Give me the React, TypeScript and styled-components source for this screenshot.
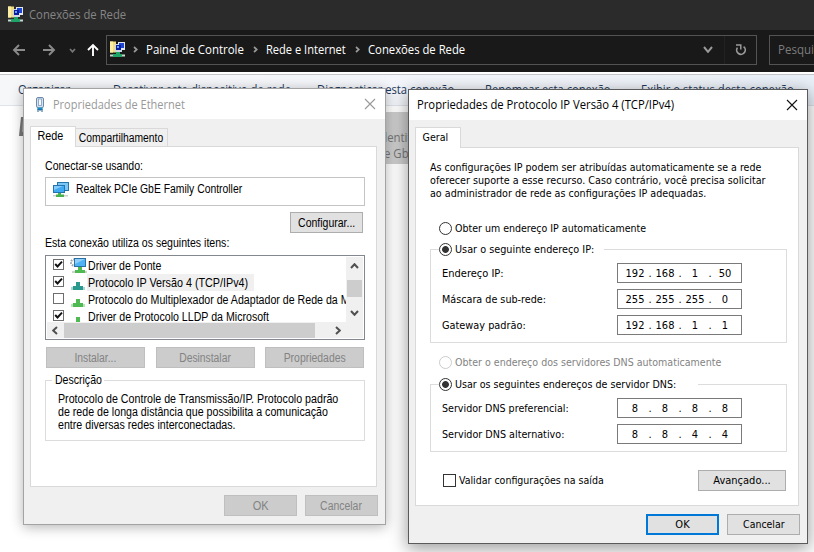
import React from 'react';
import styled, { createGlobalStyle, css } from 'styled-components';

const Global = createGlobalStyle`
  *, *::before, *::after { box-sizing: border-box; }
  body { margin: 0; background: #fff; overflow: hidden; }
  p { margin: 0; }
`;

const segoe = css`font-family: "Open Sans", "Noto Sans", sans-serif; font-size: 12px;`;
const tahoma = css`font-family: "DejaVu Sans Condensed", "DejaVu Sans", sans-serif; font-stretch: condensed; font-size: 11px;`;
const msSans = css`font-family: "Liberation Sans", Arial, sans-serif; font-size: 12px;`;

/* A run of text, horizontally condensed by $sx */
const T = styled.span<{ $sx?: number; $center?: boolean }>`
  display: inline-block;
  white-space: pre;
  transform: scaleX(${p => p.$sx ?? 1});
  transform-origin: ${p => (p.$center ? 'center' : 'left')};
`;

/* ---------- Explorer window ---------- */
const Desktop = styled.main`
  position: relative;
  width: 814px;
  height: 552px;
  overflow: hidden;
  background: #fff;
  color: #000;
`;
const ExplorerTitle = styled.header`
  ${segoe}
  height: 30px;
  padding: 0 0 1px 7px;
  display: flex;
  align-items: center;
  gap: 5px;
  background: #2b2b2b;
  color: #858585;
`;
const NavBar = styled.nav`
  ${segoe}
  height: 42px;
  background: #191919;
  display: flex;
  align-items: flex-start;
  padding-top: 5px;
`;
const NavButtons = styled.div`
  width: 106px;
  height: 30px;
  flex: none;
  display: flex;
  align-items: center;
`;
const AddressBox = styled.div`
  width: 651px;
  height: 30px;
  flex: none;
  border: 1px solid #535353;
  display: flex;
  align-items: center;
  padding: 0 0 1px 2px;
  color: #fff;
`;
const Crumb = styled.div<{ $w: number }>`
  width: ${p => p.$w}px;
  flex: none;
  display: flex;
  align-items: center;
`;
const ChevronSlot = styled.span`
  width: 20px;
  padding-right: 2px;
  flex: none;
  display: flex;
  justify-content: center;
`;
const AddressTools = styled.div`
  margin-left: auto;
  height: 28px;
  display: flex;
  align-items: center;
`;
const ToolSlot = styled.span<{ $w: number; $divider?: boolean }>`
  width: ${p => p.$w}px;
  height: 28px;
  display: flex;
  align-items: center;
  justify-content: center;
  border-left: ${p => (p.$divider ? '1px solid #222' : '0')};
`;
const SearchBox = styled.div`
  width: 80px;
  height: 30px;
  flex: none;
  margin-left: 12px;
  border: 1px solid #535353;
  padding: 0 0 1px 8px;
  display: flex;
  align-items: center;
  color: #7c7c7c;
`;
const CommandBar = styled.div`
  ${segoe}
  margin-top: 2px;
  height: 32px;
  border-top: 1px solid #c4c6c9;
  border-bottom: 1px solid #dfe3ea;
  background: linear-gradient(90deg, #f6f7f9, #f3f6fb 60%, #eaf0f8);
  color: #1e395b;
  display: flex;
  align-items: center;
  padding: 0 0 1px 18px;
`;
const Command = styled.div<{ $w: number }>`
  width: ${p => p.$w}px;
  flex: none;
  display: flex;
  align-items: center;
  gap: 2px;
`;
const Files = styled.section`
  ${segoe}
  display: flex;
  height: 446px;
  padding: 6px 0 0 19px;
`;
const SelectedConnection = styled.div`
  margin-left: 250px;
  width: 240px;
  height: 52px;
  background: #ccc;
  color: #777;
  line-height: 16px;
  padding-top: 18px;
  display: flex;
  flex-direction: column;
`;
const ConnectionLine = styled.div<{ $indent: number }>`
  padding-left: ${p => p.$indent}px;
`;

/* ---------- Dialog windows ---------- */
const Dialog = styled.section<{ $x: number; $y: number; $w: number; $h: number; $active?: boolean }>`
  position: absolute;
  left: ${p => p.$x}px;
  top: ${p => p.$y}px;
  width: ${p => p.$w}px;
  height: ${p => p.$h}px;
  border: 1px solid ${p => (p.$active ? '#5a5a5a' : '#a3a3a3')};
  background: #f0f0f0;
  box-shadow: ${p => (p.$active ? '0 4px 16px 1px rgba(0,0,0,.38)' : '0 2px 12px 0 rgba(0,0,0,.3)')};
`;
const DialogTitle = styled.header<{ $active?: boolean }>`
  ${segoe}
  height: 30px;
  background: #fff;
  display: flex;
  align-items: center;
  gap: 7px;
  padding: 0 9px ${p => (p.$active ? '1px 8px' : '0 11px')};
  color: ${p => (p.$active ? '#000' : '#999')};
`;
const CloseSlot = styled.span`
  margin-left: auto;
  display: flex;
`;
const TabStrip = styled.div`
  margin: 7px 0 0 6px;
  height: 20px;
  display: flex;
  align-items: flex-end;
`;
const Tab = styled.div<{ $w: number; $on?: boolean; $tahoma?: boolean }>`
  ${p => (p.$tahoma ? tahoma : msSans)}
  width: ${p => p.$w}px;
  height: ${p => (p.$on ? 21 : 18)}px;
  margin-bottom: ${p => (p.$on ? -1 : 0)}px;
  position: relative;
  z-index: 1;
  border: 1px solid #d9d9d9;
  border-bottom: 0;
  border-left-width: ${p => (p.$on ? 1 : 0)}px;
  background: ${p => (p.$on ? '#fff' : '#f0f0f0')};
  display: flex;
  justify-content: center;
  align-items: center;
  padding: 0 ${p => (p.$on ? 5 : 0)}px ${p => (p.$on ? 2 : 0)}px 0;
`;
const Page = styled.div<{ $w: number; $h: number; $tahoma?: boolean }>`
  ${p => (p.$tahoma ? tahoma : msSans)}
  width: ${p => p.$w}px;
  height: ${p => p.$h}px;
  margin-left: 6px;
  border: 1px solid #d9d9d9;
  background: #fff;
  padding: 0 11px 0 14px;
`;
const Footer = styled.footer<{ $tahoma?: boolean }>`
  ${p => (p.$tahoma ? tahoma : msSans)}
  display: flex;
  justify-content: flex-end;
  gap: 8px;
  padding: 8px 7px 0 0;
`;
const ButtonFace = styled.button<{ $w: number; $primary?: boolean }>`
  font: inherit;
  width: ${p => p.$w}px;
  height: 21px;
  padding: 0;
  display: flex;
  align-items: center;
  justify-content: center;
  color: #000;
  background: #e1e1e1;
  border: ${p => (p.$primary ? '2px solid #0078d7' : '1px solid #adadad')};
  &:disabled { color: #838383; background: #ccc; border-color: #bfbfbf; }
`;
const Line = styled.div<{ $h: number; $top?: number }>`
  height: ${p => p.$h}px;
  margin-top: ${p => p.$top ?? 0}px;
  display: flex;
  align-items: center;
`;
const AdapterBox = styled.div`
  height: 29px;
  margin-top: 3px;
  border: 1px solid #c4c4c4;
  display: flex;
  align-items: center;
  gap: 7px;
  padding: 0 0 5px 6px;
`;
const RightRow = styled.div`
  display: flex;
  justify-content: flex-end;
  padding: 6px 2px 0 0;
`;
const ListBox = styled.div`
  width: 320px;
  height: 85px;
  margin-top: 4px;
  border: 1px solid #828790;
  padding: 1px;
  display: flex;
  flex-direction: column;
`;
const ListTop = styled.div`
  display: flex;
  height: 65px;
`;
const Items = styled.div`
  flex: 1;
  min-width: 0;
  height: 65px;
  overflow: hidden;
`;
const Item = styled.div`
  height: 17px;
  padding-left: 6px;
  display: flex;
  align-items: flex-start;
  white-space: nowrap;
`;
const ItemCheck = styled.span`
  padding-top: 2px;
`;
const ItemIcon = styled.span`
  width: 17px;
  height: 17px;
  margin-left: 6px;
  flex: none;
  display: flex;
`;
const ItemText = styled.span<{ $selected?: boolean }>`
  width: ${p => (p.$selected ? '167px' : 'auto')};
  height: 17px;
  line-height: 19px;
  padding-left: 1px;
  background: ${p => (p.$selected ? '#f0f0f0' : 'transparent')};
`;
const CheckBox = styled.span<{ $s: number; $dark?: boolean }>`
  width: ${p => p.$s}px;
  height: ${p => p.$s}px;
  flex: none;
  border: 1px solid ${p => (p.$dark ? '#333' : '#6e6e6e')};
  background: #fff;
  display: flex;
`;
const VScroll = styled.div`
  width: 17px;
  height: 65px;
  background: #f0f0f0;
  display: flex;
  flex-direction: column;
  align-items: center;
  padding-top: 6px;
`;
const VThumb = styled.div`
  width: 15px;
  height: 17px;
  margin: 11px 0 13px;
  background: #cdcdcd;
`;
const HScroll = styled.div`
  height: 16px;
  background: #f0f0f0;
  display: flex;
  align-items: center;
  padding-left: 5px;
`;
const HThumb = styled.div`
  width: 251px;
  height: 15px;
  margin: 0 20px 0 6px;
  background: #cdcdcd;
`;
const ButtonRow = styled.div`
  display: flex;
  justify-content: space-between;
  padding: 7px 1px 0 1px;
`;
const Group = styled.div<{ $h: number; $top: number; $w: number }>`
  width: ${p => p.$w}px;
  height: ${p => p.$h}px;
  margin-top: ${p => p.$top}px;
  border: 1px solid #dcdcdc;
`;
const Legend = styled.div<{ $w: number; $left: number }>`
  width: ${p => p.$w}px;
  height: 14px;
  margin: -8px 0 4px ${p => p.$left}px;
  background: #fff;
  display: flex;
  align-items: center;
`;
const Paragraph = styled.p<{ $pad: string }>`
  padding: ${p => p.$pad};
  line-height: 13px;
  display: flex;
  flex-direction: column;
`;
const Radio = styled.span<{ $on?: boolean; $disabled?: boolean }>`
  width: 13px;
  height: 13px;
  flex: none;
  margin-right: 3px;
  border: 1px solid ${p => (p.$disabled ? '#ccc' : '#333')};
  border-radius: 50%;
  background: ${p => (p.$on ? 'radial-gradient(circle, #333 0 3px, #fff 3.8px)' : '#fff')};
`;
const RadioLine = styled(Line)<{ $disabled?: boolean }>`
  padding-left: 9px;
  color: ${p => (p.$disabled ? '#838383' : '#000')};
`;
const Field = styled.div`
  height: 26px;
  padding: 0 44px 0 11px;
  display: flex;
  align-items: center;
  justify-content: space-between;
`;
const IpBox = styled.div`
  width: 125px;
  height: 20px;
  border: 1px solid #7a7a7a;
  padding-left: 4px;
  display: grid;
  grid-template-columns: 26px 4px 26px 4px 26px 4px 26px;
  align-items: center;
  text-align: center;
`;
const ValidateRow = styled.div`
  display: flex;
  align-items: center;
  justify-content: space-between;
  padding: 0 1px 0 13px;
  margin-top: 18px;
  height: 21px;
`;
const Inline = styled.span`
  display: flex;
  align-items: center;
  gap: 3px;
`;

/* ---------- Icons ---------- */
const NetworkFolderIcon = () => (
  <svg width="17" height="17" viewBox="0 0 17 17">
    <path d="M1 .5h6v11H1z" fill="#f3dc7c" />
    <path d="M1 .5h3v11H1z" fill="#fbeea6" />
    <rect x="6" y="3" width="7" height="8" fill="#cfd6e6" />
    <rect x="9" y="1" width="7" height="8" fill="#e3e7f0" />
    <rect x="10" y="2" width="5" height="5" fill="#1c46d6" />
    <rect x="7" y="4" width="5" height="5" fill="#0a1f9c" />
    <rect x="8" y="5" width="2" height="2" fill="#6f9cf2" />
    <path d="M7 11h4v2h2v3H4v-3h3z" fill="#1fa468" />
    <path d="M1 13.500h3v2H1zM13 13.500h3v2h-3z" fill="#c9d6cf" />
  </svg>
);
const Arrow = ({ dir, color }: { dir: 'left' | 'right' | 'up'; color: string }) => {
  const d = {
    left: 'M13 7H2M7 2L2 7L7 12',
    right: 'M1 7H12M7 2L12 7L7 12',
    up: 'M7 13V2M2 7L7 2L12 7',
  }[dir];
  return <svg width="14" height="14" viewBox="0 0 14 14"><path d={d} fill="none" stroke={color} strokeWidth="1.9" /></svg>;
};
type ChevronProps = { dir: 'left' | 'right' | 'up' | 'down'; color: string; w?: number; h?: number; sw?: number };
const Chevron = ({ dir, color, w = 6, h = 6, sw = 1.7 }: ChevronProps) => {
  const d = {
    down: `M1 1L${w / 2} ${h - 1.2}L${w - 1} 1`,
    up: `M1 ${h - 1}L${w / 2} 1.2L${w - 1} ${h - 1}`,
    right: `M1 1L${w - 1.2} ${h / 2}L1 ${h - 1}`,
    left: `M${w - 1} 1L1.2 ${h / 2}L${w - 1} ${h - 1}`,
  }[dir];
  return <svg width={w} height={h} viewBox={`0 0 ${w} ${h}`}><path d={d} fill="none" stroke={color} strokeWidth={sw} /></svg>;
};
const RefreshIcon = () => (
  <svg width="12" height="13" viewBox="0 0 12 13">
    <path d="M2.400 4.600A4.300 4.300 0 1 0 8.600 3.600" fill="none" stroke="#9a9a9a" strokeWidth="1.700" />
    <path d="M1 2H5.800V6.400" fill="none" stroke="#9a9a9a" strokeWidth="1.500" />
  </svg>
);
const CloseIcon = ({ color }: { color: string }) => (
  <svg width="12" height="12" viewBox="0 0 12 12"><path d="M1 1L11 11M11 1L1 11" stroke={color} strokeWidth="1.1" /></svg>
);
const PlugIcon = () => (
  <svg width="11" height="17" viewBox="0 0 11 17">
    <path d="M1.500 3Q1.500 1.500 3 1.500H7Q8.500 1.500 8.500 3V10L7.500 12H2.500L1.500 10Z" fill="#d5e2f0" stroke="#6c88aa" />
    <rect x="3.500" y="3" width="3" height="6.500" fill="#f4f8fc" stroke="#8ea4bf" strokeWidth=".9" />
    <path d="M2.500 11.500h5v2.500h-5z" fill="#178bc4" />
    <path d="M3 13v3M5 13v2M7 13v3" stroke="#245f91" />
  </svg>
);
const AdapterIcon = () => (
  <svg width="17" height="17" viewBox="0 0 17 17">
    <rect x="5.500" y="1.500" width="11" height="8" fill="#7cc5f5" stroke="#2575ad" />
    <rect x="1.500" y="4.500" width="11" height="7" fill="#3fa8f2" stroke="#2273b0" />
    <path d="M2 5h9L2 9z" fill="#85cbfa" />
    <path d="M6 12h3v1.500h3V16H4v-2.500h2z" fill="#48b04e" />
    <path d="M1 14h3v1.500H1zM12 14h4v1.500h-4z" fill="#ccd1cc" />
  </svg>
);
const BridgeIcon = () => (
  <svg width="17" height="17" viewBox="0 0 17 17">
    <circle cx="4" cy="5.500" r="3" fill="none" stroke="#9aa5ae" strokeWidth="2" strokeDasharray="1.6 1" />
    <rect x="4.500" y="1.500" width="11" height="8" fill="#4fb2f7" stroke="#2d6f9f" />
    <path d="M5 2h10L5 7z" fill="#8fd0fb" />
    <path d="M8 10h4v3h3v3H5v-3h3z" fill="#4fba51" />
    <path d="M2 14h3v2H2zM15 14h2v2h-2z" fill="#ccd3cd" />
  </svg>
);
const ProtocolIcon = ({ color, kind = 'full' }: { color: string; kind?: 'full' | 'part' }) => (
  <svg width="17" height="17" viewBox="0 0 17 17">
    {kind === 'full' ? (
      <>
        <path d="M6 8h4v4h3v4H3v-4h3z" fill={color} />
        <path d="M1 13h2v3H1zM13 13h2v3h-2z" fill={color} fillOpacity=".4" />
      </>
    ) : <path d="M6 9h4v5H6z" fill={color} />}
  </svg>
);
const Check = () => (
  <svg width="9" height="9" viewBox="0 0 9 9"><path d="M1.200 4L3.500 6.500L8 1.600" fill="none" stroke="#111" strokeWidth="1.900" /></svg>
);
const ComputerSliver = () => (
  <svg width="20" height="26" viewBox="0 0 20 26">
    <path d="M2 5h18v19H0z" fill="#777" /><path d="M4 7h17v13H3z" fill="#aaa" />
  </svg>
);
const Caret = () => (
  <svg width="8" height="4" viewBox="0 0 8 4"><path d="M0 0h8L4 4z" fill="#1e395b" /></svg>
);

const items = [
  { text: 'Driver de Ponte', sx: 0.88, on: true, icon: <BridgeIcon /> },
  { text: 'Protocolo IP Versão 4 (TCP/IPv4)', sx: 0.897, on: true, selected: true, icon: <ProtocolIcon color="#2a9a8e" /> },
  { text: 'Protocolo do Multiplexador de Adaptador de Rede da Microsoft', sx: 0.885, on: false, icon: <ProtocolIcon color="#4fba51" /> },
  { text: 'Driver de Protocolo LLDP da Microsoft', sx: 0.885, on: true, icon: <ProtocolIcon color="#4fba51" kind="part" /> },
];

type ButtonProps = { w: number; label: string; sx?: number; primary?: boolean; disabled?: boolean };
const Button = ({ w, label, sx, primary, disabled }: ButtonProps) => (
  <ButtonFace $w={w} $primary={primary} disabled={disabled}><T $sx={sx} $center>{label}</T></ButtonFace>
);

const IpField = ({ label, value, sx }: { label: string; value: string[]; sx?: number }) => (
  <Field>
    <T $sx={sx}>{label}</T>
    <IpBox>
      {value.map((v, i) => (
        <React.Fragment key={i}>
          {i > 0 && <span>.</span>}
          <span>{v}</span>
        </React.Fragment>
      ))}
    </IpBox>
  </Field>
);

const crumbs = [
  { text: 'Painel de Controle', w: 120, sx: 0.953 },
  { text: 'Rede e Internet', w: 102, sx: 0.925 },
  { text: 'Conexões de Rede', w: 130, sx: 0.94 },
];
const commands = [
  { text: 'Desativar este dispositivo de rede', w: 204, sx: 0.945 },
  { text: 'Diagnosticar esta conexão', w: 168, sx: 0.935 },
  { text: 'Renomear esta conexão', w: 156, sx: 0.93 },
  { text: 'Exibir o status desta conexão', w: 170, sx: 0.938 },
];

const Explorer = () => (
  <>
    <ExplorerTitle><NetworkFolderIcon /><T $sx={0.94}>Conexões de Rede</T></ExplorerTitle>
    <NavBar>
      <NavButtons>
        <ToolSlot $w={38}><Arrow dir="left" color="#8b8b8b" /></ToolSlot>
        <ToolSlot $w={22}><Arrow dir="right" color="#8b8b8b" /></ToolSlot>
        <ToolSlot $w={25}><Chevron dir="down" color="#777" w={7} h={5} /></ToolSlot>
        <ToolSlot $w={16}><Arrow dir="up" color="#fff" /></ToolSlot>
      </NavButtons>
      <AddressBox>
        <NetworkFolderIcon />
        {crumbs.map(c => (
          <Crumb key={c.text} $w={c.w}>
            <ChevronSlot><Chevron dir="right" color="#999" w={5} h={7} /></ChevronSlot>
            <T $sx={c.sx}>{c.text}</T>
          </Crumb>
        ))}
        <AddressTools>
          <ToolSlot $w={32}><Chevron dir="down" color="#9a9a9a" w={10} h={7} sw={2} /></ToolSlot>
          <ToolSlot $w={32} $divider><RefreshIcon /></ToolSlot>
        </AddressTools>
      </AddressBox>
      <SearchBox><T $sx={0.96}>Pesquisar</T></SearchBox>
    </NavBar>
    <CommandBar>
      <Command $w={95}><T $sx={0.95}>Organizar</T><Caret /></Command>
      {commands.map(c => <Command key={c.text} $w={c.w}><T $sx={c.sx}>{c.text}</T></Command>)}
    </CommandBar>
    <Files>
      <ComputerSliver />
      <SelectedConnection>
        <ConnectionLine $indent={88}><T $sx={0.95}>Identificando...</T></ConnectionLine>
        <ConnectionLine $indent={95}><T $sx={0.95}>e GbE Family</T></ConnectionLine>
      </SelectedConnection>
    </Files>
  </>
);

const EthernetDialog = () => (
  <Dialog $x={23} $y={88} $w={363} $h={437}>
    <DialogTitle><PlugIcon /><T $sx={0.917}>Propriedades de Ethernet</T><CloseSlot><CloseIcon color="#999" /></CloseSlot></DialogTitle>
    <TabStrip>
      <Tab $w={46} $on><T $sx={0.9} $center>Rede</T></Tab>
      <Tab $w={92}><T $sx={0.86} $center>Compartilhamento</T></Tab>
    </TabStrip>
    <Page $w={347} $h={341}>
      <Line $h={16} $top={11}><T $sx={0.88}>Conectar-se usando:</T></Line>
      <AdapterBox><AdapterIcon /><T $sx={0.865}>Realtek PCIe GbE Family Controller</T></AdapterBox>
      <RightRow><Button w={73} sx={0.875} label="Configurar..." /></RightRow>
      <Line $h={16} $top={2}><T $sx={0.88}>Esta conexão utiliza os seguintes itens:</T></Line>
      <ListBox>
        <ListTop>
          <Items>
            {items.map(i => (
              <Item key={i.text}>
                <ItemCheck><CheckBox $s={11}>{i.on && <Check />}</CheckBox></ItemCheck>
                <ItemIcon>{i.icon}</ItemIcon>
                <ItemText $selected={i.selected}><T $sx={i.sx}>{i.text}</T></ItemText>
              </Item>
            ))}
          </Items>
          <VScroll>
            <Chevron dir="up" color="#505050" w={9} h={6} sw={2} />
            <VThumb />
            <Chevron dir="down" color="#505050" w={9} h={6} sw={2} />
          </VScroll>
        </ListTop>
        <HScroll>
          <Chevron dir="left" color="#505050" w={6} h={9} sw={2} />
          <HThumb />
          <Chevron dir="right" color="#505050" w={6} h={9} sw={2} />
        </HScroll>
      </ListBox>
      <ButtonRow>
        <Button w={99} sx={0.86} disabled label="Instalar..." />
        <Button w={99} sx={0.86} disabled label="Desinstalar" />
        <Button w={99} sx={0.87} disabled label="Propriedades" />
      </ButtonRow>
      <Group $w={320} $h={61} $top={12}>
        <Legend $w={52} $left={6}><T $sx={0.88}> Descrição</T></Legend>
        <Paragraph $pad="2px 0 0 12px">
          <T $sx={0.889}>Protocolo de Controle de Transmissão/IP. Protocolo padrão</T>
          <T $sx={0.887}>de rede de longa distância que possibilita a comunicação</T>
          <T $sx={0.887}>entre diversas redes interconectadas.</T>
        </Paragraph>
      </Group>
    </Page>
    <Footer>
      <Button w={73} sx={0.92} disabled label="OK" />
      <Button w={73} sx={0.87} disabled label="Cancelar" />
    </Footer>
  </Dialog>
);

const Ipv4Dialog = () => (
  <Dialog $x={408} $y={89} $w={400} $h={455} $active>
    <DialogTitle $active><T $sx={0.938}>Propriedades de Protocolo IP Versão 4 (TCP/IPv4)</T><CloseSlot><CloseIcon color="#111" /></CloseSlot></DialogTitle>
    <TabStrip><Tab $w={46} $on $tahoma><T $sx={0.96} $center>Geral</T></Tab></TabStrip>
    <Page $w={384} $h={359} $tahoma>
      <Paragraph $pad="13px 0 0 0">
        <T $sx={0.959}>As configurações IP podem ser atribuídas automaticamente se a rede</T>
        <T $sx={0.971}>oferecer suporte a esse recurso. Caso contrário, você precisa solicitar</T>
        <T $sx={0.968}>ao administrador de rede as configurações IP adequadas.</T>
      </Paragraph>
      <RadioLine $h={17} $top={20}><Radio /><T $sx={0.957}>Obter um endereço IP automaticamente</T></RadioLine>
      <Group $w={357} $h={94} $top={12}>
        <Legend $w={165} $left={8}><Radio $on /><T $sx={0.979}>Usar o seguinte endereço IP:</T></Legend>
        <IpField label="Endereço IP:" value={['192', '168', '1', '50']} />
        <IpField label="Máscara de sub-rede:" sx={0.972} value={['255', '255', '255', '0']} />
        <IpField label="Gateway padrão:" sx={0.985} value={['192', '168', '1', '1']} />
      </Group>
      <RadioLine $h={17} $top={11} $disabled><Radio $disabled /><T $sx={0.96}>Obter o endereço dos servidores DNS automaticamente</T></RadioLine>
      <Group $w={357} $h={68} $top={13}>
        <Legend $w={259} $left={8}><Radio $on /><T $sx={0.965}>Usar os seguintes endereços de servidor DNS:</T></Legend>
        <IpField label="Servidor DNS preferencial:" sx={0.965} value={['8', '8', '8', '8']} />
        <IpField label="Servidor DNS alternativo:" sx={0.972} value={['8', '8', '4', '4']} />
      </Group>
      <ValidateRow>
        <Inline><CheckBox $s={13} $dark /><T $sx={0.956}>Validar configurações na saída</T></Inline>
        <Button w={88} label="Avançado..." />
      </ValidateRow>
    </Page>
    <Footer $tahoma>
      <Button w={73} primary label="OK" />
      <Button w={73} sx={0.95} label="Cancelar" />
    </Footer>
  </Dialog>
);

export default function App() {
  return (
    <>
      <Global />
      <Desktop>
        <Explorer />
        <EthernetDialog />
        <Ipv4Dialog />
      </Desktop>
    </>
  );
}
